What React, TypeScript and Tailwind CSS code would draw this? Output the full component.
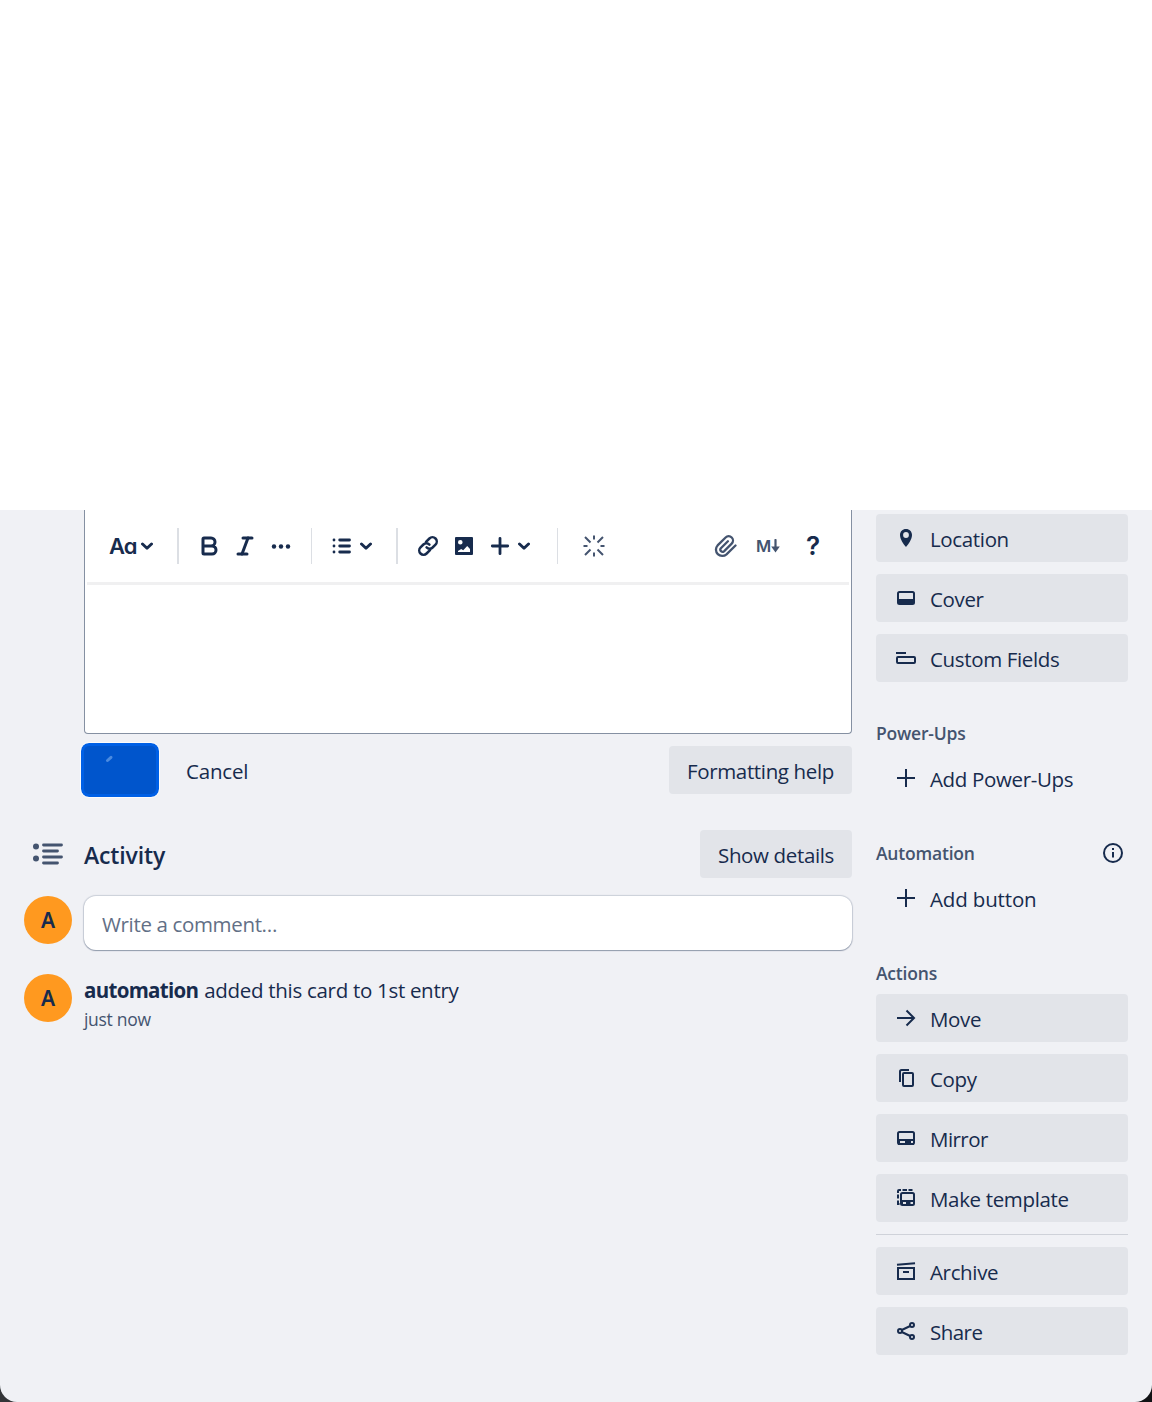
import type { ReactNode } from "react";
import { Bold, Italic } from "lucide-react";

const sw = { fill: "none", stroke: "currentColor", strokeWidth: 2 } as const;

function Svg({ children, className = "" }: { children: ReactNode; className?: string }) {
  return (
    <svg viewBox="0 0 24 24" className={"h-6 w-6 shrink-0 " + className} aria-hidden="true">
      {children}
    </svg>
  );
}

function Chevron({ className }: { className: string }) {
  return (
    <svg viewBox="0 0 12 8" className={"h-2 w-3 shrink-0 " + className} aria-hidden="true">
      <path d="M1.500 2 L6 6.300 L10.500 2" fill="none" stroke="currentColor" strokeWidth="2.900" strokeLinecap="round" strokeLinejoin="round" />
    </svg>
  );
}

const icons = {
  location: (
    <Svg>
      <path fillRule="evenodd" fill="currentColor" d="M12 3c-3.500 0-6 2.600-6 6 0 4.200 3.400 9 6 12 2.600-3 6-7.800 6-12 0-3.400-2.500-6-6-6zm0 3.100a2.900 2.900 0 1 1 0 5.800 2.900 2.900 0 0 1 0-5.800z" />
    </Svg>
  ),
  cover: (
    <Svg>
      <rect x="4" y="6" width="16" height="12" rx="1.500" {...sw} />
      <path d="M4 13h16v5H4z" fill="currentColor" />
    </Svg>
  ),
  fields: (
    <Svg>
      <path d="M2 7h10" {...sw} />
      <rect x="3" y="11" width="18" height="6" rx="1" {...sw} />
    </Svg>
  ),
  plus: (
    <Svg>
      <path d="M12 3v18M3 12h18" {...sw} />
    </Svg>
  ),
  arrow: (
    <Svg>
      <path d="M3 12h17M12.500 4.500 20 12l-7.500 7.500" {...sw} />
    </Svg>
  ),
  copy: (
    <Svg>
      <path d="M6 16V5.500Q6 4 7.500 4H15" {...sw} />
      <rect x="9" y="7" width="10" height="13" rx="1" {...sw} />
    </Svg>
  ),
  mirror: (
    <Svg>
      <rect x="4" y="6" width="16" height="12" rx="1.500" {...sw} />
      <path fillRule="evenodd" fill="currentColor" d="M4 13h16v6H4zM6 15v2h5v-2zM17 15v2h2v-2z" />
    </Svg>
  ),
  template: (
    <Svg>
      <path d="M4 7V5q0-1 1-1h2M8.500 4h4.500M14.500 4h4M4 8.500v4M4 14.500v3.500h1.500" {...sw} />
      <rect x="7" y="7" width="13" height="12" rx="1.500" {...sw} />
      <path fillRule="evenodd" fill="currentColor" d="M7 14h13v5H7zM9 16v2h3v-2zM16.500 16v2H19v-2z" />
    </Svg>
  ),
  archive: (
    <Svg>
      <path d="M3 5.700 21 4.200" {...sw} />
      <path d="M4 9h16v11H4zM9 13h6" {...sw} />
    </Svg>
  ),
  share: (
    <Svg>
      <circle cx="6" cy="12" r="2" {...sw} />
      <circle cx="18" cy="6" r="2" {...sw} />
      <circle cx="18" cy="18" r="2" {...sw} />
      <path d="M7.800 11 16.200 7M7.800 13l8.400 4" {...sw} />
    </Svg>
  ),
};

function SideButton({ icon, label, plain, tracking = "tracking-[-0.35px]" }: { icon: ReactNode; label: string; plain?: boolean; tracking?: string }) {
  return (
    <button className={"flex h-12 w-full shrink-0 items-center gap-3 rounded-[4px] pl-[18px] " + (plain ? "" : "bg-[#e2e4e9]")}>
      {icon}
      <span className={"mt-px whitespace-nowrap " + tracking}>{label}</span>
    </button>
  );
}

function Avatar() {
  return (
    <div className="flex h-12 w-12 shrink-0 items-center justify-center rounded-full bg-[#ff991f] font-['Noto_Sans',sans-serif] text-[21px] font-semibold">
      A
    </div>
  );
}

function Divider({ className }: { className: string }) {
  return <div className={"h-9 shrink-0 bg-[#dcdfe4] " + className} />;
}

function Toolbar() {
  return (
    <div className="flex h-[72px] items-center pl-6">
      <span className="w-7 font-['Inter',sans-serif] text-[22px] leading-6 font-semibold tracking-[-0.8px] whitespace-nowrap [font-feature-settings:'cv11']">Aa</span>
      <Chevron className="ml-1" />
      <Divider className="ml-6 w-0.5" />
      <Bold className="ml-[18px] shrink-0" size={24} strokeWidth={3} />
      <Italic className="ml-3 shrink-0" size={24} strokeWidth={3} />
      <Svg className="ml-3">
        <circle cx="5" cy="12.500" r="2.200" fill="currentColor" />
        <circle cx="12" cy="12.500" r="2.200" fill="currentColor" />
        <circle cx="19" cy="12.500" r="2.200" fill="currentColor" />
      </Svg>
      <Divider className="ml-[18px] w-px" />
      <Svg className="ml-[18px]">
        <path d="M9.700 6h9.800M9.700 12h9.800M9.700 18h9.800M4 6h.01M4 12h.01M4 18h.01" fill="none" stroke="currentColor" strokeWidth="2.800" strokeLinecap="round" />
      </Svg>
      <Chevron className="ml-1.5" />
      <Divider className="ml-6 w-0.5" />
      <Svg className="ml-[18px]">
        <g transform="rotate(-45 12 12)" fill="none" stroke="currentColor" strokeWidth="2.500" strokeLinecap="round">
          <path d="M10.500 16.300H5.700a4.300 4.300 0 0 1 0-8.600h4.100a4.300 4.300 0 0 1 4.200 4.300" />
          <path d="M13.500 7.700h4.800a4.300 4.300 0 0 1 0 8.600h-4.100a4.300 4.300 0 0 1-4.200-4.300" />
        </g>
      </Svg>
      <Svg className="ml-3">
        <path fillRule="evenodd" fill="currentColor" d="M4 3h16a1 1 0 0 1 1 1v16a1 1 0 0 1-1 1H4a1 1 0 0 1-1-1V4a1 1 0 0 1 1-1zM8.300 6a2.300 2.300 0 1 0 0 4.600 2.300 2.300 0 0 0 0-4.600zM6 18h12v-3l-2.800-3-4 4.200-2-1.200L6 17z" />
      </Svg>
      <Svg className="ml-3">
        <path d="M12 4.300v15.400M4.300 12h15.400" fill="none" stroke="currentColor" strokeWidth="2.800" strokeLinecap="round" />
      </Svg>
      <Chevron className="ml-1.5" />
      <Divider className="ml-[27px] w-px" />
      <Svg className="ml-6 text-[#44546f]">
        <path d="M12 1.500v4M12 18.500v4M1.500 12h4M18.500 12h4M3 3l5.500 5.500M15.500 15.500l5.500 5.500M3 21l5.500-5.500M15.500 8.500l5.500-5.500" {...sw} />
      </Svg>
      <Svg className="ml-[107px] text-[#44546f]">
        <path d="m22.500 11.500-9 8.800a6.300 6.300 0 0 1-8.900-8.900l8-7.900a4.300 4.300 0 0 1 6.100 6.100l-7.700 7.700a2.200 2.200 0 0 1-3.100-3.100l7-7" fill="none" stroke="currentColor" strokeWidth="2.300" strokeLinecap="round" />
      </Svg>
      <div className="ml-[19px] flex w-6 shrink-0 items-center text-[#44546f]">
        <span className="w-[14px] shrink-0 font-['Inter',sans-serif] text-[16.500px] leading-6 font-semibold">M</span>
        <svg viewBox="0 0 10 14" className="h-[14px] w-[10px] shrink-0" aria-hidden="true">
          <path d="M5.500 1v8" fill="none" stroke="currentColor" strokeWidth="2.200" strokeLinecap="round" />
          <path d="M1.200 7.500h8.600l-4.300 6z" fill="currentColor" />
        </svg>
      </div>
      <span className="ml-[21px] w-6 text-center font-['Inter',sans-serif] text-[26px] leading-6 font-semibold">?</span>
    </div>
  );
}

function SideHeading({ children, className = "" }: { children: ReactNode; className?: string }) {
  return (
    <div className={"flex h-10 shrink-0 items-center justify-between text-[17.500px] font-semibold tracking-[-0.2px] text-[#44546f] " + className}>
      {children}
    </div>
  );
}

export default function App() {
  return (
    <div className="flex h-[1402px] w-[1152px] flex-col overflow-hidden bg-white font-['Open_Sans','Noto_Sans',sans-serif] text-[20.500px] leading-[30px] tracking-[-0.35px] text-[#172b4d]">
      <div className="h-[510px] shrink-0" />
      <div className="min-h-0 flex-1 bg-gradient-to-r from-[#333538] to-[#111214]">
        <div className="flex h-full rounded-b-[17px] bg-[#f0f1f5]">
          <main className="w-[852px] shrink-0 pl-6">
            <div className="ml-[60px] h-56 rounded-b-[4px] border border-t-0 border-[#8590a2] bg-white">
              <Toolbar />
              <div className="mx-0.5 h-[3px] bg-[#f0f0f1]" />
            </div>

            <div className="mt-3 ml-[60px] flex h-12 items-center">
              <button className="h-12 w-[72px] rounded-[5px] bg-[#0055cc] ring-[3px] ring-[#0060e5] outline-1 outline-offset-[3px] outline-white/70" aria-label="Saving">
                <svg viewBox="0 0 72 48" className="h-12 w-[72px]" aria-hidden="true">
                  <path d="M23.500 14.500 27 11.300" stroke="#4b8be0" strokeWidth="3" strokeLinecap="round" />
                </svg>
              </button>
              <span className="mt-px ml-[30px] tracking-[-0.2px]">Cancel</span>
              <button className="ml-auto h-12 w-[183px] rounded-[4px] bg-[#e2e4e9] pt-px whitespace-nowrap">Formatting help</button>
            </div>

            <div className="mt-9 flex h-12 items-center">
              <svg viewBox="0 0 32 24" className="ml-2 h-6 w-8 text-[#44546f]" aria-hidden="true">
                <circle cx="4" cy="4.500" r="3" fill="currentColor" />
                <circle cx="4" cy="16.500" r="3" fill="currentColor" />
                <path d="M11.500 3h18M11.500 9h14M11.500 15h18M11.500 21h14" stroke="currentColor" strokeWidth="2.800" strokeLinecap="round" />
              </svg>
              <h2 className="mt-0.5 ml-5 text-[23px] font-semibold tracking-[-0.15px]">Activity</h2>
              <button className="ml-auto h-12 w-[152px] rounded-[4px] bg-[#e2e4e9] pt-px whitespace-nowrap">Show details</button>
            </div>

            <div className="mt-[18px] flex gap-3">
              <Avatar />
              <div className="flex h-[54px] flex-1 items-center rounded-xl bg-white pt-px pl-[18px] text-[#626f86] shadow-[0_1px_1px_rgba(9,30,66,0.3),0_0_1px_1px_rgba(9,30,66,0.16)]">
                Write a comment…
              </div>
            </div>

            <div className="mt-6 flex gap-3">
              <Avatar />
              <div className="pt-px">
                <div className="whitespace-nowrap">
                  <b className="tracking-[-0.7px]">automation</b> <span className="ml-px tracking-[-0.3px]">added this card to 1st entry</span>
                </div>
                <div className="-mt-px text-[17.500px] tracking-[-0.3px] text-[#44546f]">just now</div>
              </div>
            </div>
          </main>

          <aside className="ml-6 w-[252px] shrink-0 pt-1">
            <div className="flex flex-col gap-3">
              <SideButton icon={icons.location} label="Location" />
              <SideButton icon={icons.cover} label="Cover" />
              <SideButton icon={icons.fields} label="Custom Fields" />
            </div>
            <SideHeading className="mt-8">
              <span className="-mt-0.5">Power-Ups</span>
            </SideHeading>
            <SideButton plain icon={icons.plus} label="Add Power-Ups" />
            <SideHeading className="mt-8">
              <span className="-mt-0.5">Automation</span>
              <Svg className="mr-[3px] text-[#172b4d]">
                <circle cx="12" cy="11" r="9" {...sw} />
                <path d="M12 10v5.500M12 6v2" {...sw} />
              </Svg>
            </SideHeading>
            <SideButton plain icon={icons.plus} label="Add button" tracking="tracking-[-0.15px]" />
            <SideHeading className="mt-8">
              <span className="-mt-0.5">Actions</span>
            </SideHeading>
            <div className="flex flex-col gap-3">
              <SideButton icon={icons.arrow} label="Move" />
              <SideButton icon={icons.copy} label="Copy" />
              <SideButton icon={icons.mirror} label="Mirror" tracking="tracking-[-0.55px]" />
              <SideButton icon={icons.template} label="Make template" />
              <div className="h-px bg-[#cfd2d9]" />
              <SideButton icon={icons.archive} label="Archive" />
              <SideButton icon={icons.share} label="Share" tracking="tracking-[-0.55px]" />
            </div>
          </aside>
        </div>
      </div>
    </div>
  );
}
